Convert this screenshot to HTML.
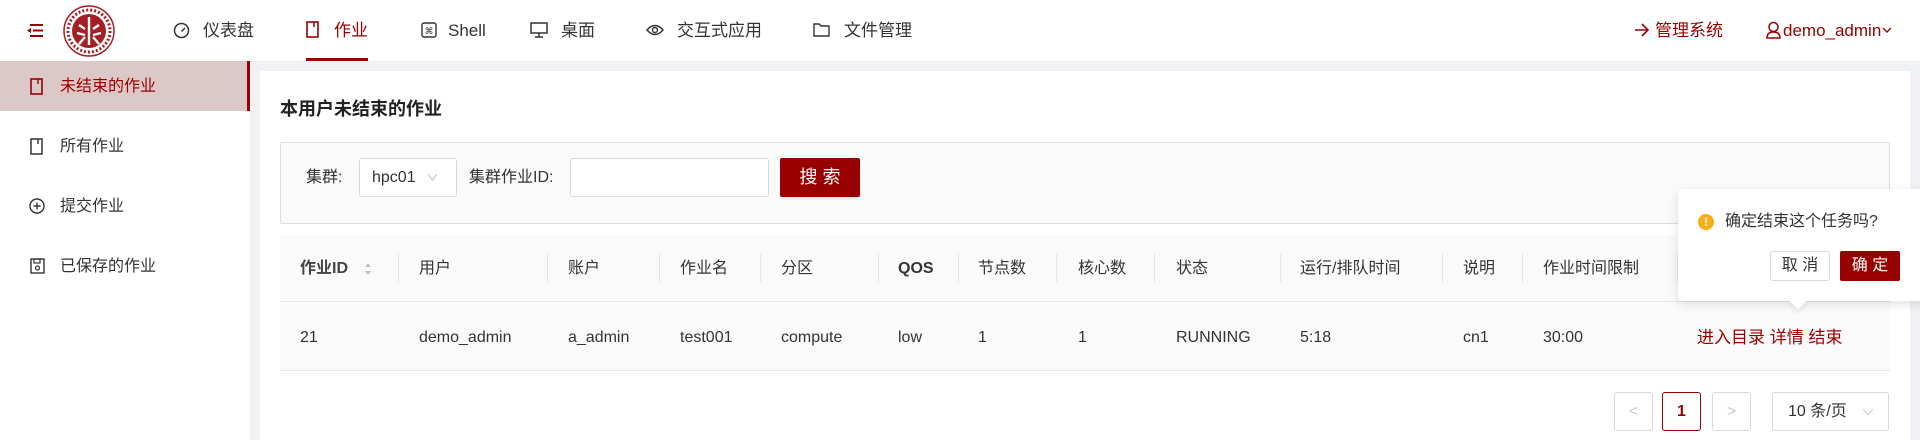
<!DOCTYPE html>
<html><head><meta charset="utf-8"><style>
*{box-sizing:border-box;margin:0;padding:0}
body{width:1920px;height:440px;overflow:hidden;background:#f0f1f4;font-family:"Liberation Sans","Noto Sans CJK SC",sans-serif;font-size:16px;line-height:22px;color:#333;position:relative}
.a{position:absolute;white-space:nowrap}
.hdr{position:absolute;left:0;top:0;width:1920px;height:61px;background:#fff}
.side{position:absolute;left:0;top:61px;width:250px;height:379px;background:#fff}
.card{position:absolute;left:260px;top:71px;width:1650px;height:369px;background:#fff}
.red{color:#990000 !important}
.th{position:absolute;top:258px;font-size:16px;color:#333}
.td{position:absolute;top:327px;font-size:16px;color:#333}
.sep{position:absolute;top:254px;width:1px;height:28px;background:#e6e6e6}
.box{position:absolute;border:1px solid #d9d9d9;background:#fff;border-radius:3px}
.nv{font-size:17px;top:20px}
</style></head><body>
<div class="hdr"></div>
<svg class="a" style="left:26px;top:23px" width="18" height="15" viewBox="0 0 18 15"><g stroke="#990000" stroke-width="2"><line x1="4" y1="2" x2="17" y2="2"/><line x1="7" y1="7.5" x2="17" y2="7.5"/><line x1="4" y1="13" x2="17" y2="13"/></g><path d="M5 5 L1 7.5 L5 10Z" fill="#990000"/></svg>
<svg class="a" style="left:63px;top:5px" width="52" height="52" viewBox="0 0 52 52"><circle cx="26" cy="26" r="25" fill="#fff" stroke="#a31f24" stroke-width="1.5"/><circle cx="26" cy="26" r="17" fill="#a31f24"/><circle cx="26" cy="26" r="21" fill="none" stroke="#a31f24" stroke-width="3" stroke-dasharray="2 2"/><g stroke="#fff" stroke-width="2.4" fill="none"><line x1="26" y1="12" x2="26" y2="40"/><path d="M16 20 L22 24 M36 20 L30 24 M14 28 L22 30 M38 28 L30 30 M22 32 L16 39 M30 32 L36 39"/></g></svg>
<svg class="a" style="left:173px;top:22px" width="17" height="17" viewBox="0 0 17 17"><circle cx="8.5" cy="8.5" r="7" fill="none" stroke="#333" stroke-width="1.5"/><line x1="8.5" y1="9.5" x2="12" y2="6" stroke="#333" stroke-width="1.5"/></svg>
<div class="a nv" style="left:203px">仪表盘</div>
<svg class="a" style="left:306px;top:21px" width="13" height="17" viewBox="0 0 13 17"><rect x="1" y="1" width="11" height="15" fill="none" stroke="#990000" stroke-width="1.6"/><line x1="8" y1="1" x2="8" y2="6" stroke="#990000" stroke-width="1.5"/></svg>
<div class="a nv red" style="left:334px">作业</div>
<div class="a" style="left:306px;top:58px;width:62px;height:3px;background:#990000"></div>
<svg class="a" style="left:421px;top:22px" width="16" height="16" viewBox="0 0 16 16"><rect x="1" y="1" width="14" height="14" rx="2" fill="none" stroke="#333" stroke-width="1.4"/><text x="8" y="12" font-size="9" text-anchor="middle" fill="#333" font-family="DejaVu Sans">⌘</text></svg>
<div class="a nv" style="left:448px">Shell</div>
<svg class="a" style="left:530px;top:22px" width="18" height="16" viewBox="0 0 18 16"><rect x="1" y="1" width="16" height="10" fill="none" stroke="#333" stroke-width="1.5"/><line x1="9" y1="11" x2="9" y2="15" stroke="#333" stroke-width="1.5"/><line x1="5" y1="15" x2="13" y2="15" stroke="#333" stroke-width="1.5"/></svg>
<div class="a nv" style="left:561px">桌面</div>
<svg class="a" style="left:646px;top:23px" width="18" height="14" viewBox="0 0 18 14"><path d="M1 7 Q9 -2 17 7 Q9 16 1 7Z" fill="none" stroke="#333" stroke-width="1.4"/><circle cx="9" cy="7" r="2.5" fill="none" stroke="#333" stroke-width="1.4"/></svg>
<div class="a nv" style="left:677px">交互式应用</div>
<svg class="a" style="left:813px;top:22px" width="17" height="15" viewBox="0 0 17 15"><path d="M1 2 H6 L8 4 H16 V14 H1Z" fill="none" stroke="#333" stroke-width="1.4"/></svg>
<div class="a nv" style="left:844px">文件管理</div>
<svg class="a" style="left:1634px;top:23px" width="16" height="14" viewBox="0 0 16 14"><path d="M1 7H14M8 1L14 7L8 13" fill="none" stroke="#990000" stroke-width="1.6"/></svg>
<div class="a nv red" style="left:1655px">管理系统</div>
<svg class="a" style="left:1766px;top:21px" width="15" height="18" viewBox="0 0 15 18"><circle cx="7.5" cy="6" r="4.5" fill="none" stroke="#990000" stroke-width="1.5"/><path d="M1 17 Q1 11 7.5 11 Q14 11 14 17Z" fill="none" stroke="#990000" stroke-width="1.5"/></svg>
<div class="a nv red" style="left:1783px">demo_admin</div>
<svg class="a" style="left:1882px;top:27px" width="10" height="7" viewBox="0 0 10 7"><path d="M1 1L5 5L9 1" fill="none" stroke="#990000" stroke-width="1.4"/></svg>

<div class="side"></div>
<div class="a" style="left:0;top:61px;width:250px;height:50px;background:#dcc8c7;border-right:3px solid #990000"></div>
<svg class="a" style="left:30px;top:78px" width="13" height="17" viewBox="0 0 13 17"><rect x="1" y="1" width="11" height="15" fill="none" stroke="#990000" stroke-width="1.6"/><line x1="8" y1="1" x2="8" y2="6" stroke="#990000" stroke-width="1.4"/></svg>
<div class="a red" style="left:60px;top:76px">未结束的作业</div>
<svg class="a" style="left:30px;top:138px" width="13" height="17" viewBox="0 0 13 17"><rect x="1" y="1" width="11" height="15" fill="none" stroke="#333" stroke-width="1.5"/><line x1="8" y1="1" x2="8" y2="6" stroke="#333" stroke-width="1.4"/></svg>
<div class="a" style="left:60px;top:136px">所有作业</div>
<svg class="a" style="left:29px;top:198px" width="16" height="16" viewBox="0 0 16 16"><circle cx="8" cy="8" r="7" fill="none" stroke="#333" stroke-width="1.4"/><path d="M8 4.5V11.5M4.5 8H11.5" stroke="#333" stroke-width="1.4"/></svg>
<div class="a" style="left:60px;top:196px">提交作业</div>
<svg class="a" style="left:30px;top:258px" width="15" height="16" viewBox="0 0 15 16"><rect x="1" y="1" width="13" height="14" fill="none" stroke="#333" stroke-width="1.4"/><rect x="4" y="1" width="6" height="4" fill="none" stroke="#333" stroke-width="1.2"/><circle cx="7.5" cy="10" r="2" fill="none" stroke="#333" stroke-width="1.2"/></svg>
<div class="a" style="left:60px;top:256px">已保存的作业</div>

<div class="card"></div>
<div class="a" style="left:280px;top:98px;font-size:18px;font-weight:bold;color:#222">本用户未结束的作业</div>
<div class="a" style="left:280px;top:142px;width:1610px;height:82px;background:#fafafa;border:1px solid #ddd;border-radius:2px"></div>
<div class="a" style="left:306px;top:167px">集群:</div>
<div class="box" style="left:359px;top:158px;width:98px;height:39px"></div>
<div class="a" style="left:372px;top:167px">hpc01</div>
<svg class="a" style="left:427px;top:173px" width="11" height="8" viewBox="0 0 11 8"><path d="M1 1L5.5 7L10 1" fill="none" stroke="#bbb" stroke-width="1"/></svg>
<div class="a" style="left:469px;top:167px">集群作业ID:</div>
<div class="box" style="left:570px;top:158px;width:199px;height:39px"></div>
<div class="a" style="left:780px;top:158px;width:80px;height:39px;background:#990000;color:#fff;font-size:18px;text-align:center;line-height:39px;border-radius:2px;box-shadow:0 2px 2px rgba(0,0,0,.1)">搜 索</div>

<div class="a" style="left:280px;top:235px;width:1610px;height:136px;background:#fafafa;border-bottom:1px solid #e8e8e8"></div>
<div class="a" style="left:280px;top:301px;width:1610px;height:1px;background:#e8e8e8"></div>
<div class="th" style="left:300px;font-weight:bold;color:#444">作业ID</div>
<svg class="a" style="left:364px;top:262px" width="8" height="14" viewBox="0 0 8 14"><path d="M4 1L7 5H1Z M4 13L7 9H1Z" fill="#bfbfbf"/></svg>
<div class="th" style="left:419px">用户</div><div class="th" style="left:568px">账户</div><div class="th" style="left:680px">作业名</div><div class="th" style="left:781px">分区</div><div class="th" style="left:898px;font-weight:bold">QOS</div><div class="th" style="left:978px">节点数</div><div class="th" style="left:1078px">核心数</div><div class="th" style="left:1176px">状态</div><div class="th" style="left:1300px">运行/排队时间</div><div class="th" style="left:1463px">说明</div><div class="th" style="left:1543px">作业时间限制</div>
<div class="sep" style="left:398px"></div><div class="sep" style="left:547px"></div><div class="sep" style="left:659px"></div><div class="sep" style="left:760px"></div><div class="sep" style="left:878px"></div><div class="sep" style="left:958px"></div><div class="sep" style="left:1056px"></div><div class="sep" style="left:1154px"></div><div class="sep" style="left:1280px"></div><div class="sep" style="left:1442px"></div><div class="sep" style="left:1522px"></div><div class="sep" style="left:1677px"></div>
<div class="td" style="left:300px">21</div><div class="td" style="left:419px">demo_admin</div><div class="td" style="left:568px">a_admin</div><div class="td" style="left:680px">test001</div><div class="td" style="left:781px">compute</div><div class="td" style="left:898px">low</div><div class="td" style="left:978px">1</div><div class="td" style="left:1078px">1</div><div class="td" style="left:1176px">RUNNING</div><div class="td" style="left:1300px">5:18</div><div class="td" style="left:1463px">cn1</div><div class="td" style="left:1543px">30:00</div>
<div class="td red" style="left:1697px;font-size:17px">进入目录 详情 结束</div>

<div class="box" style="left:1614px;top:392px;width:39px;height:39px;color:#ccc;text-align:center;line-height:37px">&lt;</div>
<div class="box" style="left:1662px;top:392px;width:39px;height:39px;border-color:#990000;color:#990000;font-weight:bold;text-align:center;line-height:37px">1</div>
<div class="box" style="left:1712px;top:392px;width:39px;height:39px;color:#ccc;text-align:center;line-height:37px">&gt;</div>
<div class="box" style="left:1772px;top:392px;width:117px;height:39px;line-height:37px;padding-left:15px">10 条/页</div>
<svg class="a" style="left:1862px;top:408px" width="12" height="8" viewBox="0 0 12 8"><path d="M1 1L6 7L11 1" fill="none" stroke="#ccc" stroke-width="1"/></svg>

<div class="a" style="left:1678px;top:189px;width:250px;height:112px;background:#fff;border-radius:4px;box-shadow:0 3px 10px rgba(0,0,0,.12)"></div>
<div class="a" style="left:1792px;top:295px;width:12px;height:12px;background:#fff;transform:rotate(45deg);box-shadow:3px 3px 5px rgba(0,0,0,.06)"></div>
<div class="a" style="left:1698px;top:214px;width:16px;height:16px;border-radius:50%;background:#faad14;color:#fff;font-size:12px;font-weight:bold;text-align:center;line-height:16px">!</div>
<div class="a" style="left:1725px;top:211px;color:#333">确定结束这个任务吗?</div>
<div class="box" style="left:1770px;top:251px;width:60px;height:30px;text-align:center;line-height:28px;font-size:16px">取 消</div>
<div class="a" style="left:1840px;top:251px;width:60px;height:30px;background:#990000;color:#fff;text-align:center;line-height:30px;border-radius:2px">确 定</div>
</body></html>
